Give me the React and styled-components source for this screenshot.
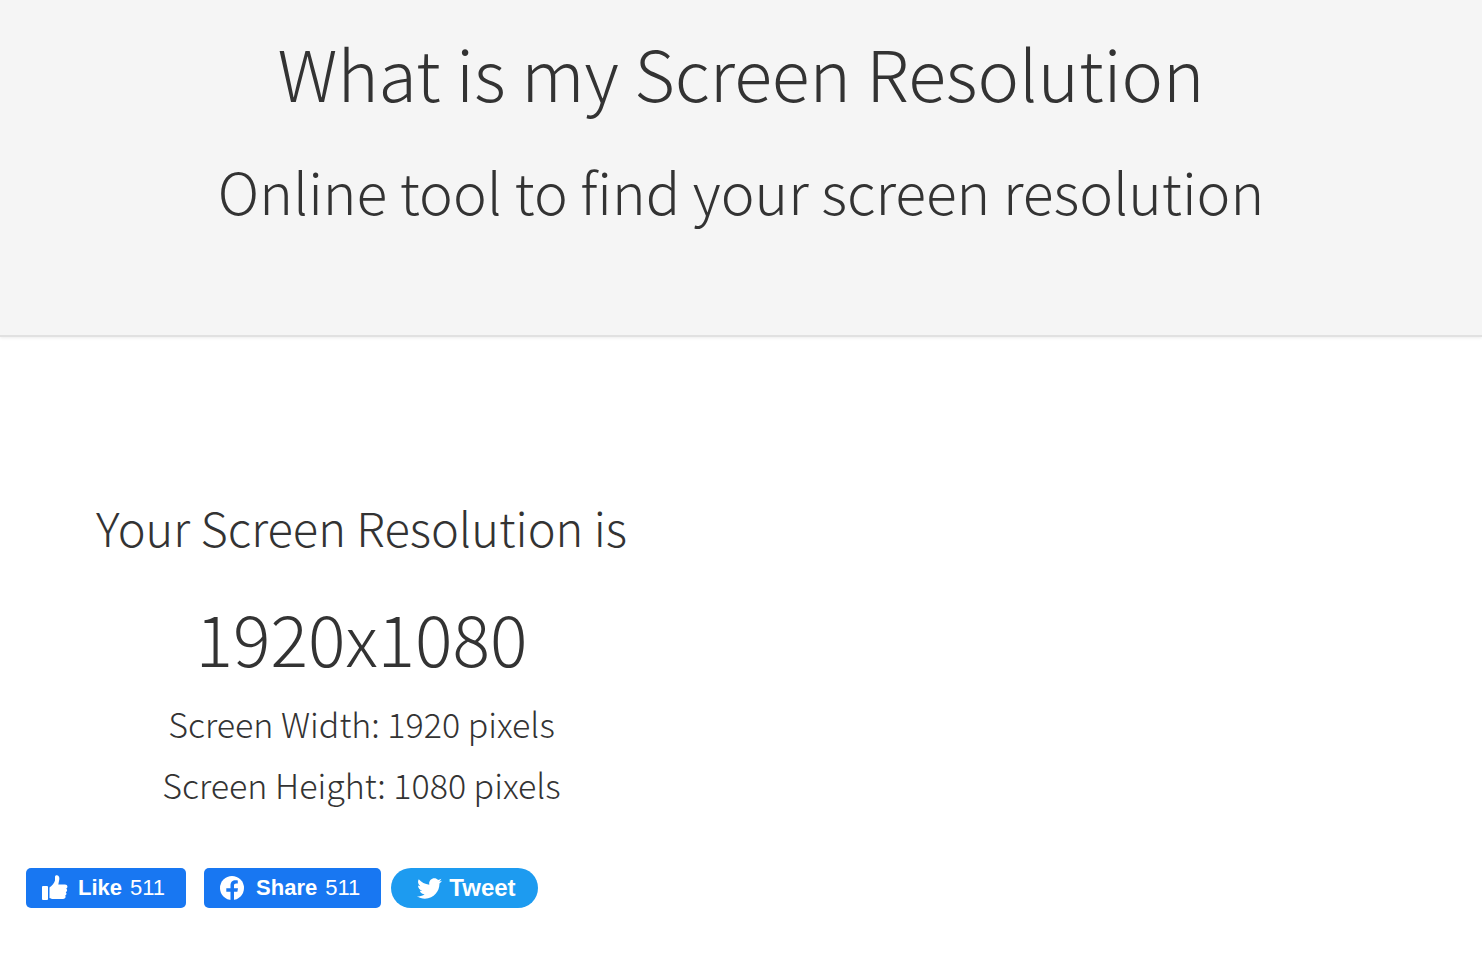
import React from 'react';
import styled, { createGlobalStyle } from 'styled-components';
import { FaTwitter } from 'react-icons/fa';

const GlobalStyle = createGlobalStyle`
* {
    box-sizing: border-box;
}
body {
    margin: 0;
    background: #fff;
    color: #333;
    font-family: "Noto Sans CJK SC", "Noto Sans", sans-serif;
    font-weight: 300;
}
`

const Header = styled.header`
padding: 20px 16px 97px;
background: #f5f5f5;
border-bottom: 2px solid #e1e1e1;
box-shadow: 0 1px 3px rgba(0, 0, 0, 0.08);
text-align: center;
`

const H1 = styled.h1`
margin: 0;
font-size: 70px;
font-weight: 300;
line-height: 104px;
`

const H2 = styled.h2`
margin: 18px 0 0;
font-size: 57px;
font-weight: 300;
line-height: 96px;
`

const Main = styled.main`
display: grid;
grid-template-columns: 1fr 1fr;
padding-top: 158px;
`

const Result = styled.section`
padding: 0 0 56px 26px;
`

const Info = styled.div`
padding-right: 44px;
text-align: center;
`

const H3 = styled.h3`
margin: 0;
font-size: 47px;
font-weight: 300;
line-height: 64px;
`

const Resolution = styled.p`
margin: 26px 0 4px;
font-size: 70px;
line-height: 104px;
`

const Size = styled.p`
margin: 0;
font-size: 34px;
line-height: 61px;
`

const Social = styled.div`
display: flex;
margin-top: 53px;
`

const SocialButton = styled.button`
display: flex;
align-items: center;
height: 40px;
margin-right: ${(props) => props.$gap || '0'};
padding: 0 ${(props) => (props.$round ? '22px' : '21px')} 0 ${(props) => (props.$round ? '26px' : '16px')};
border: 0;
border-radius: ${(props) => (props.$round ? '20px' : '5px')};
background: ${(props) => (props.$round ? '#1d9bf0' : '#1877f2')};
color: #fff;
font-family: "Liberation Sans", Arial, sans-serif;
font-size: ${(props) => (props.$round ? '24px' : '22px')};
cursor: pointer;

svg {
    flex: none;
    margin-right: ${(props) => (props.$round ? '7px' : '10px')};
}
`

const Count = styled.span`
margin-left: 8px;
`

const ThumbIcon = () => (
    <svg width="26" height="26" viewBox="0 0 26 26" fill="#fff" aria-hidden="true">
        <rect x="0" y="11" width="6" height="14" rx="1" />
        <path d="M7.5 12.5C10 10.5 12.5 8 13 5.5V2C13 .5 14 0 15 .2c2 .4 2.600 2.300 2.300 4.300L16.300 9.500H23c3 0 3 3.500 1.200 4 1.500 1 1 3.200-.4 3.700 1.200 1 .7 3-.6 3.400.9 1.200.2 3.400-2 3.400h-9.500c-2 0-3-.5-4.200-1z" />
    </svg>
)

const FacebookIcon = () => (
    <svg width="26" height="26" viewBox="0 0 26 26" aria-hidden="true">
        <circle cx="12" cy="13" r="12" fill="#fff" />
        <path d="M10.500 25v-8.300H6.300v-3.500h4.200V10.500c0-3.600 2-5.300 5-5.300 1.200 0 2.300.2 2.300.2v3.200h-1.600c-1.600 0-2.200.9-2.200 2v2.600h4l-.6 3.500H14V25z" fill="#1877f2" />
    </svg>
)

const App = () => {
    return (
        <>
            <GlobalStyle />
            <Header>
                <H1>What is my Screen Resolution</H1>
                <H2>Online tool to find your screen resolution</H2>
            </Header>
            <Main>
                <Result>
                    <Info>
                        <H3>Your Screen Resolution is</H3>
                        <Resolution>1920x1080</Resolution>
                        <Size>Screen Width: 1920 pixels</Size>
                        <Size>Screen Height: 1080 pixels</Size>
                    </Info>
                    <Social>
                        <SocialButton type="button" $gap="18px">
                            <ThumbIcon />
                            <b>Like</b>
                            <Count>511</Count>
                        </SocialButton>
                        <SocialButton type="button" $gap="10px">
                            <FacebookIcon />
                            <b>Share</b>
                            <Count>511</Count>
                        </SocialButton>
                        <SocialButton type="button" $round>
                            <FaTwitter size={25} />
                            <b>Tweet</b>
                        </SocialButton>
                    </Social>
                </Result>
            </Main>
        </>
    )
}

export default App
